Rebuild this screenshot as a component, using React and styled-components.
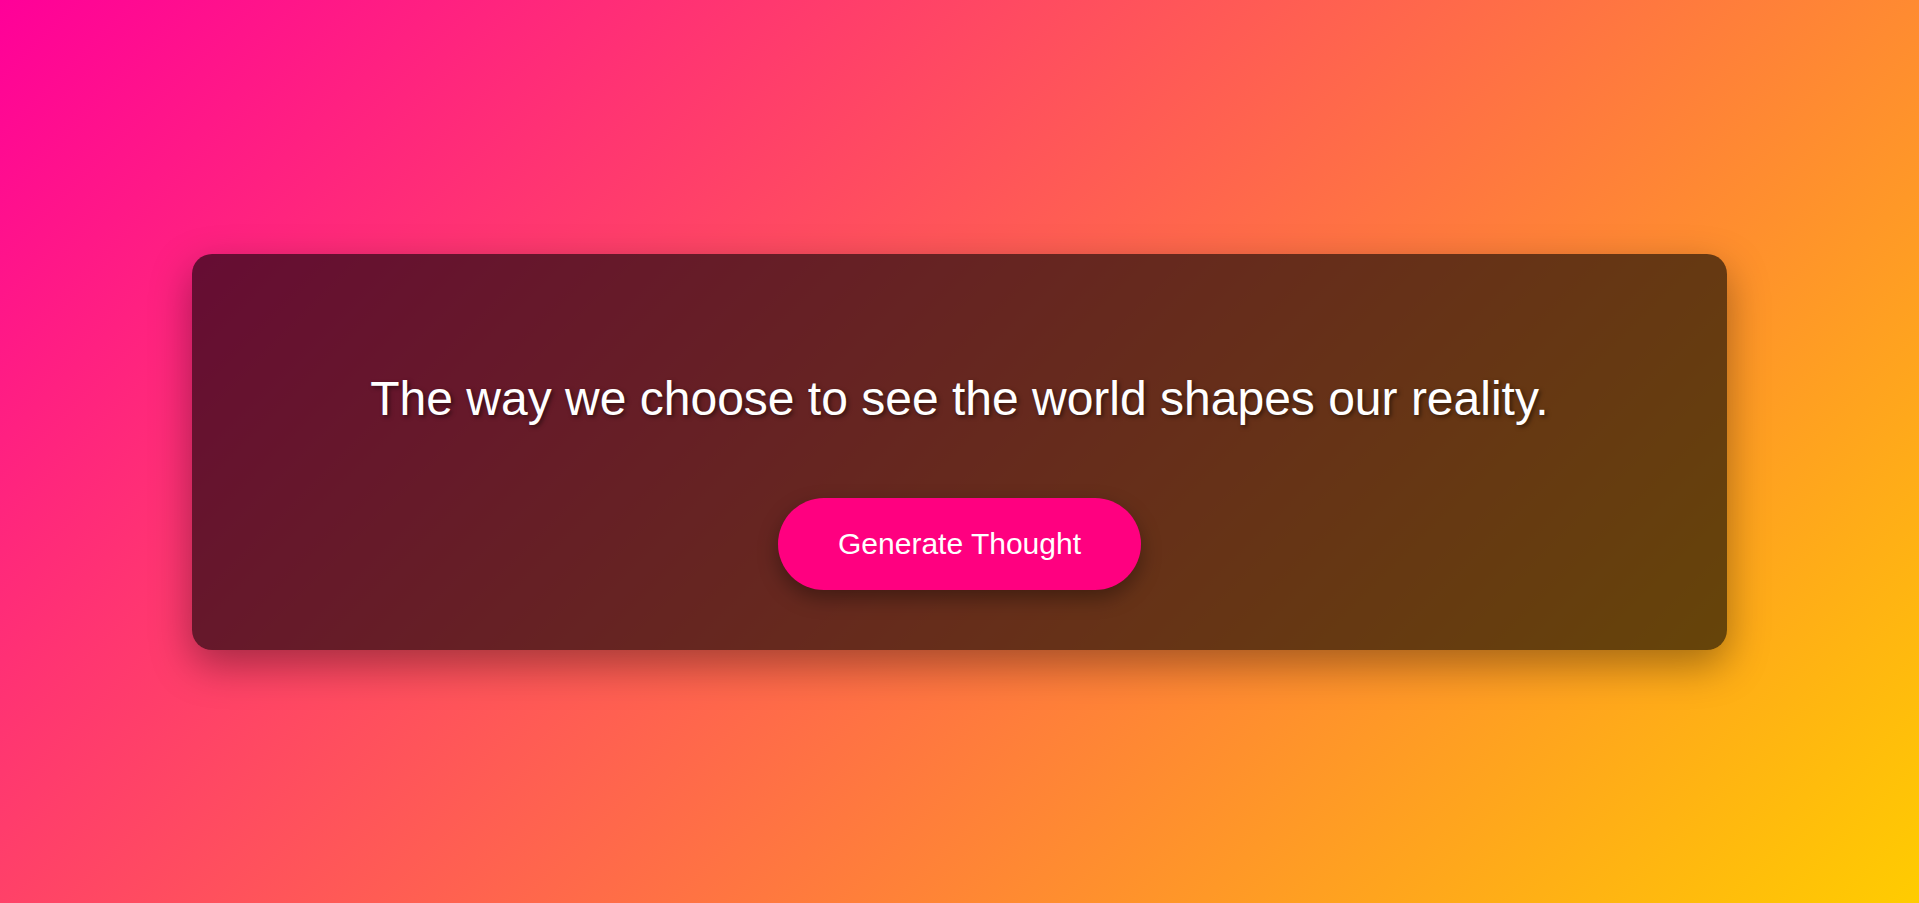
import React, { useState } from "react";
import styled, { createGlobalStyle } from "styled-components";

const thoughts = [
  "The way we choose to see the world shapes our reality.",
  "Every moment is a fresh beginning.",
  "Small steps every day lead to big changes.",
  "What we think, we become.",
];

function App() {
  const [index, setIndex] = useState(0);

  return (
    <>
      <GlobalStyle />
      <Page>
        <Card>
          <Quote>{thoughts[index]}</Quote>
          <GenerateBtn onClick={() => setIndex((index + 1) % thoughts.length)}>
            Generate Thought
          </GenerateBtn>
        </Card>
      </Page>
    </>
  );
}

export default App;

const GlobalStyle = createGlobalStyle`
  * {
    box-sizing: border-box;
  }
  body {
    margin: 0;
    font-family: "Liberation Sans", Arial, sans-serif;
  }
`;

const Page = styled.div`
  display: flex;
  justify-content: center;
  align-items: center;
  width: 100%;
  height: 100vh;
  background: linear-gradient(135deg, #ff0099, #ffcc00);
`;

const Card = styled.div`
  display: flex;
  flex-direction: column;
  align-items: center;
  width: 80%;
  padding: 117px 40px 60px;
  background-color: rgba(0, 0, 0, 0.6);
  border-radius: 20px;
  box-shadow: 0 15px 40px rgba(0, 0, 0, 0.35);
`;

const Quote = styled.p`
  margin: 0 0 72px;
  font-size: 48px;
  color: #ffffff;
  text-align: center;
  text-shadow: 2px 2px 4px rgba(0, 0, 0, 0.5);
`;

const GenerateBtn = styled.button`
  padding: 29px 60px;
  font-family: "Liberation Sans", Arial, sans-serif;
  font-size: 30px;
  color: #ffffff;
  background-color: #ff0080;
  border: none;
  border-radius: 50px;
  box-shadow: 0 8px 20px rgba(0, 0, 0, 0.35);
  cursor: pointer;
`;
